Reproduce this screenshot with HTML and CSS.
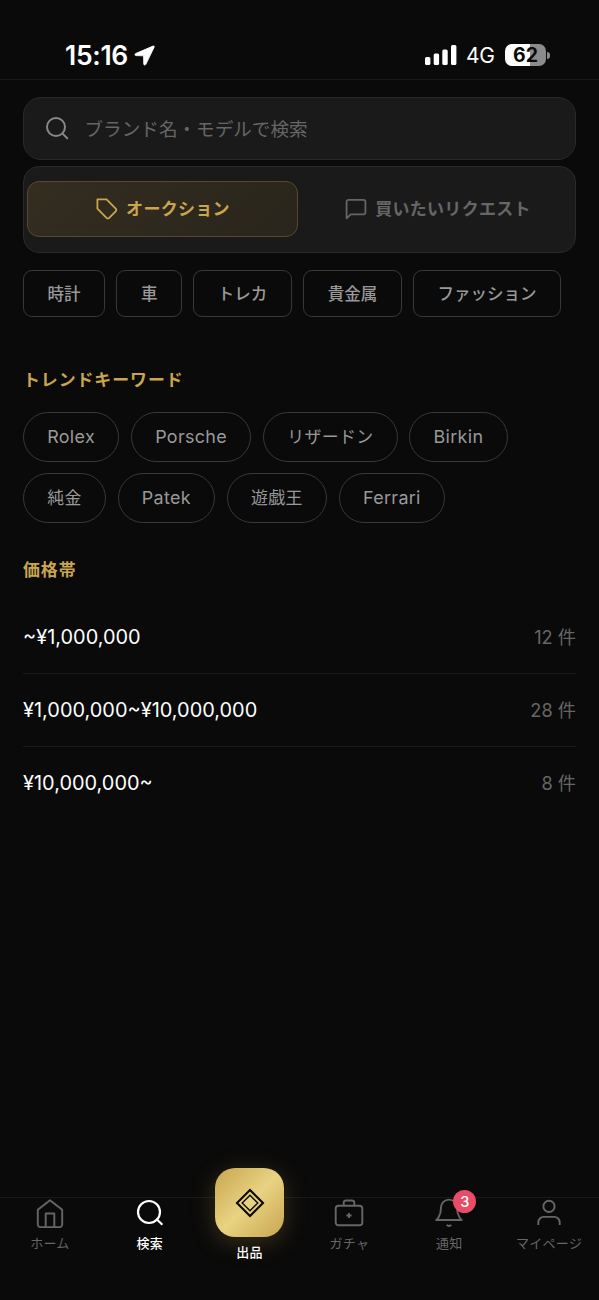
FILE: index.html
```html
<!DOCTYPE html>
<html lang="ja">
<head>
<meta charset="utf-8">
<meta name="viewport" content="width=device-width, initial-scale=1">
<title>検索</title>
<link rel="stylesheet" href="styles.css">
</head>
<body>
<div class="app">
  <header class="status">
    <div class="status-left">
      <span class="time">15:16</span>
      <svg class="location" viewBox="0 0 20 20"><path d="M18.2 1 1.5 8.2c-1 .5-.8 1.8.3 1.9l7.3.2.2 7.8c0 1.2 1.5 1.4 2 .3L19.2 2c.3-.8-.3-1.3-1-1Z" fill="#fff" stroke="#fff" stroke-width=".8" stroke-linejoin="round"/></svg>
    </div>
    <div class="status-right">
      <svg class="signal" viewBox="0 0 32 20" fill="#fff"><rect x="0" y="12" width="5.4" height="8" rx="1.5"/><rect x="8.7" y="8.5" width="5.4" height="11.5" rx="1.5"/><rect x="17.3" y="4.5" width="5.4" height="15.5" rx="1.5"/><rect x="26" y="0" width="5.4" height="20" rx="1.5"/></svg>
      <span class="network">4G</span>
      <div class="battery"><span class="battery-body">62</span><span class="battery-cap"></span></div>
    </div>
  </header>

  <main class="content">
    <div class="search">
      <svg class="search-icon" viewBox="0 0 24 24"><circle cx="11" cy="11" r="9"/><path d="m17.6 17.6 4.6 4.6"/></svg>
      <span class="placeholder">ブランド名・モデルで検索</span>
    </div>

    <div class="tabs">
      <div class="tab tab-active">
        <svg class="tab-icon" viewBox="0 0 22 22"><path d="M1.4 1.4h9.2l9.1 9.2c.8.9.8 1.8 0 2.7l-6.5 6.5c-.9.8-1.8.8-2.7 0l-9.1-9.2Z"/></svg>
        <span class="tab-label">オークション</span>
      </div>
      <div class="tab">
        <svg class="tab-icon" viewBox="0 0 22 22"><path d="M3.5 1.8h15a1.9 1.9 0 0 1 1.9 1.9v10.8a1.9 1.9 0 0 1-1.9 1.9H5.7L1.6 20.4V3.7a1.9 1.9 0 0 1 1.9-1.9Z"/></svg>
        <span class="tab-label">買いたいリクエスト</span>
      </div>
    </div>

    <div class="categories">
      <span class="category">時計</span>
      <span class="category">車</span>
      <span class="category">トレカ</span>
      <span class="category">貴金属</span>
      <span class="category">ファッション</span>
    </div>

    <h2 class="heading">トレンドキーワード</h2>
    <div class="keywords">
      <span class="keyword latin">Rolex</span>
      <span class="keyword latin">Porsche</span>
      <span class="keyword">リザードン</span>
      <span class="keyword latin">Birkin</span>
      <span class="keyword">純金</span>
      <span class="keyword latin">Patek</span>
      <span class="keyword">遊戯王</span>
      <span class="keyword latin">Ferrari</span>
    </div>

    <h2 class="heading">価格帯</h2>
    <ul class="prices">
      <li class="price-row"><span>~¥1,000,000</span><span class="count">12 件</span></li>
      <li class="price-row"><span>¥1,000,000~¥10,000,000</span><span class="count">28 件</span></li>
      <li class="price-row"><span>¥10,000,000~</span><span class="count">8 件</span></li>
    </ul>
  </main>

  <nav class="nav">
    <div class="nav-item">
      <svg class="nav-icon" viewBox="0 0 32 32"><path d="m16 2.2 12.2 9.5v14.8a2.6 2.6 0 0 1-2.6 2.6H6.4a2.6 2.6 0 0 1-2.6-2.6V11.7ZM11.7 29V15.5h8.6V29"/></svg>
      <span>ホーム</span>
    </div>
    <div class="nav-item nav-current">
      <svg class="nav-icon" viewBox="0 0 32 32"><circle cx="15" cy="14" r="11"/><path d="m22.2 20.8 6.2 6"/></svg>
      <span>検索</span>
    </div>
    <div class="nav-item nav-sell">
      <div class="sell-button">
        <svg class="sell-icon" viewBox="0 0 30 30"><path class="outer" d="m15 2 13 13-13 13L2 15Z"/><path class="inner" d="m15 7.2 7.8 7.8-7.8 7.8L7.2 15Z"/></svg>
      </div>
      <span>出品</span>
    </div>
    <div class="nav-item">
      <svg class="nav-icon" viewBox="0 0 32 32"><rect x="2.7" y="7.7" width="26.6" height="19.6" rx="2.8"/><path d="M10.7 7.5V4.8A2.4 2.4 0 0 1 13.1 2.5h5.8a2.4 2.4 0 0 1 2.4 2.3v2.7M16 14.9v5.2M13.4 17.5h5.2"/></svg>
      <span>ガチャ</span>
    </div>
    <div class="nav-item">
      <div class="bell">
        <svg class="nav-icon" viewBox="0 0 32 32"><path d="M8 9.6a8 8 0 0 1 16 0c0 9.3 4.8 12.4 4.8 12.4H3.2S8 18.9 8 9.6M13.8 26.8a2.6 2.6 0 0 0 4.4 0"/></svg>
        <span class="badge">3</span>
      </div>
      <span>通知</span>
    </div>
    <div class="nav-item">
      <svg class="nav-icon" viewBox="0 0 32 32"><circle cx="16" cy="8.4" r="5.6"/><path d="M5.3 26.9v-2.6a5.4 5.4 0 0 1 5.4-5.4h10.6a5.4 5.4 0 0 1 5.4 5.4v2.6"/></svg>
      <span>マイページ</span>
    </div>
  </nav>
</div>
</body>
</html>
```
FILE: styles.css
```css
* { box-sizing: border-box; }

body {
  margin: 0;
  background: #0a0a0a;
  color: #fff;
  font-family: Inter, "Noto Sans CJK JP", sans-serif;
}

.app {
  display: flex;
  flex-direction: column;
  height: 1300px;
  overflow: hidden;
}

.status {
  display: flex;
  justify-content: space-between;
  height: 80px;
  padding: 38px 49px 0 65px;
  border-bottom: 1px solid #191919;
}

.status-left, .status-right {
  display: flex;
  align-items: center;
  height: 34px;
}

.time {
  font-size: 26.5px;
  font-weight: 600;
  letter-spacing: -0.3px;
}

.location { width: 21px; height: 21px; margin-left: 6px; }
.signal { width: 32px; height: 20px; margin-right: 9px; }

.network {
  width: 29px;
  margin-right: 10px;
  font-size: 21px;
  letter-spacing: -0.4px;
}

.battery { display: flex; align-items: center; gap: 1px; }

.battery-body {
  display: grid;
  place-items: center;
  width: 41px;
  height: 22px;
  border-radius: 7px;
  background: linear-gradient(90deg, #fff 62%, #8b8b8b 62%);
  color: #0a0a0a;
  font-size: 19.5px;
  font-weight: 700;
  line-height: 22px;
}

.battery-cap {
  width: 3px;
  height: 7px;
  border-radius: 0 3px 3px 0;
  background: #8b8b8b;
}

.content { flex: 1; padding: 17px 23px 0; }

.search {
  display: flex;
  align-items: center;
  height: 63px;
  padding: 0 0 2px 21px;
  border: 1.5px solid #2a2a2a;
  border-radius: 18px;
  background: #1a1a1a;
}

.search-icon {
  width: 24px;
  height: 24px;
  margin-right: 15.5px;
  fill: none;
  stroke: #888;
  stroke-width: 2;
  stroke-linecap: round;
}

.placeholder { color: #666; font-size: 18.6px; }

.tabs {
  display: grid;
  grid-template-columns: 1fr 1fr;
  gap: 5px;
  height: 86.5px;
  margin-top: 6px;
  padding: 14px 3px;
  border: 1.5px solid #2a2a2a;
  border-radius: 16px;
  background: #1a1a1a;
}

.tab {
  display: flex;
  align-items: center;
  justify-content: center;
  gap: 8px;
  height: 56px;
  padding-left: 1px;
  border: 1.5px solid transparent;
  border-radius: 12px;
  color: #666;
  font-size: 17px;
  font-weight: 600;
  letter-spacing: 0.3px;
}

.tab-label { padding-bottom: 3px; }

.tab-active {
  width: 271px;
  border-color: #574a2c;
  background: linear-gradient(135deg, #342d20, #29251c);
  color: #c9a54f;
}

.tab-icon {
  width: 22px;
  height: 22px;
  fill: none;
  stroke: currentColor;
  stroke-width: 1.8;
  stroke-linejoin: round;
}

.categories { display: flex; gap: 11.4px; margin-top: 17px; }

.category {
  height: 47.5px;
  padding: 0 23.5px;
  border: 1px solid #383838;
  border-radius: 9px;
  color: #999;
  font-size: 16.5px;
  font-weight: 500;
  line-height: 46px;
}

.heading {
  height: 24px;
  margin: 51px 0 0;
  color: #c9a54f;
  font-size: 16.9px;
  font-weight: 600;
  line-height: 24px;
  letter-spacing: 0.95px;
}

.keywords {
  display: flex;
  flex-wrap: wrap;
  gap: 11.5px 11.8px;
  margin-top: 19.5px;
}

.keyword {
  height: 50px;
  padding: 0 23.2px;
  border: 1px solid #383838;
  border-radius: 25px;
  color: #999;
  font-size: 16.9px;
  line-height: 48px;
  letter-spacing: 0.34px;
}

.latin { font-size: 17.9px; }

.keywords + .heading { margin-top: 35px; }

.prices { margin: 19px 0 0; padding: 0; list-style: none; }

.price-row {
  display: flex;
  align-items: center;
  justify-content: space-between;
  height: 72.8px;
  border-bottom: 1px solid #1a1a1a;
  font-size: 19.95px;
}

.price-row:last-child { border-bottom: 0; }
.count { padding-bottom: 2px; color: #666; font-size: 18.2px; }

.nav {
  display: grid;
  grid-template-columns: repeat(6, 1fr);
  height: 103px;
  border-top: 1px solid #191919;
}

.nav-item {
  display: flex;
  flex-direction: column;
  align-items: center;
  color: #666;
  font-size: 13px;
  line-height: 20px;
  letter-spacing: 0.3px;
  white-space: nowrap;
}

.nav-current, .nav-sell { color: #fff; font-weight: 500; }

.nav-icon {
  display: block;
  width: 32px;
  height: 32px;
  margin: -0.5px 0 3.5px;
  fill: none;
  stroke: currentColor;
  stroke-width: 1.9;
  stroke-linejoin: round;
}

.nav-current .nav-icon { stroke-width: 2.2; }

.sell-button {
  display: grid;
  place-items: center;
  width: 69px;
  height: 69px;
  margin: -30px 0 5px;
  border-radius: 20px;
  background: linear-gradient(135deg, #c9a54f, #e8d382 50%, #c9a54f);
  box-shadow: 0 5px 25px rgba(201, 165, 79, 0.25);
}

.sell-icon { width: 30px; height: 30px; fill: none; stroke: #0a0a0a; }
.outer { stroke-width: 2.1; }
.inner { stroke-width: 1.4; }

.bell { position: relative; }

.badge {
  position: absolute;
  top: -8px;
  left: 20px;
  width: 23px;
  height: 23px;
  border-radius: 50%;
  background: #e84c67;
  color: #fff;
  font-size: 14.5px;
  font-weight: 500;
  line-height: 23px;
  letter-spacing: 0;
  text-align: center;
}
```
